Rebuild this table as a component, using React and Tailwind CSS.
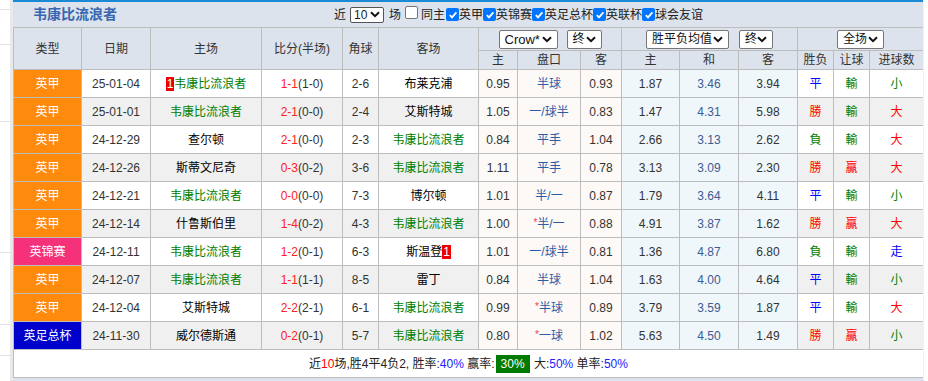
import React from 'react'

const rows = [
  {type:'英甲', date:'25-01-04', home:'韦康比流浪者', homeRank:'1', ft:'1-1', ht:'(1-0)', corner:'2-6', away:'布莱克浦', a1:'0.95', hc:'半球', a2:'0.93', e1:'1.87', ed:'3.46', e2:'3.94', r:'平', rq:'輸', ou:'小'},
  {type:'英甲', date:'25-01-01', home:'韦康比流浪者', ft:'2-1', ht:'(0-0)', corner:'2-4', away:'艾斯特城', a1:'1.05', hc:'一/球半', a2:'0.83', e1:'1.47', ed:'4.31', e2:'5.98', r:'勝', rq:'輸', ou:'大'},
  {type:'英甲', date:'24-12-29', home:'查尔顿', ft:'2-1', ht:'(0-0)', corner:'2-3', away:'韦康比流浪者', a1:'0.84', hc:'平手', a2:'1.04', e1:'2.66', ed:'3.13', e2:'2.62', r:'負', rq:'輸', ou:'大'},
  {type:'英甲', date:'24-12-26', home:'斯蒂文尼奇', ft:'0-3', ht:'(0-2)', corner:'3-6', away:'韦康比流浪者', a1:'1.11', hc:'平手', a2:'0.78', e1:'3.13', ed:'3.09', e2:'2.30', r:'勝', rq:'贏', ou:'大'},
  {type:'英甲', date:'24-12-21', home:'韦康比流浪者', ft:'0-0', ht:'(0-0)', corner:'7-3', away:'博尔顿', a1:'1.01', hc:'半/一', a2:'0.87', e1:'1.79', ed:'3.64', e2:'4.11', r:'平', rq:'輸', ou:'小'},
  {type:'英甲', date:'24-12-14', home:'什鲁斯伯里', ft:'1-4', ht:'(0-2)', corner:'4-3', away:'韦康比流浪者', a1:'1.00', hc:'半/一', star:true, a2:'0.88', e1:'4.91', ed:'3.87', e2:'1.62', r:'勝', rq:'贏', ou:'大'},
  {type:'英锦赛', date:'24-12-11', home:'韦康比流浪者', ft:'1-2', ht:'(0-1)', corner:'6-3', away:'斯温登', awayRank:'1', a1:'1.01', hc:'一/球半', a2:'0.81', e1:'1.36', ed:'4.87', e2:'6.80', r:'負', rq:'輸', ou:'走'},
  {type:'英甲', date:'24-12-07', home:'韦康比流浪者', ft:'1-1', ht:'(1-1)', corner:'8-5', away:'雷丁', a1:'0.84', hc:'半球', a2:'1.04', e1:'1.63', ed:'4.00', e2:'4.64', r:'平', rq:'輸', ou:'小'},
  {type:'英甲', date:'24-12-04', home:'艾斯特城', ft:'2-2', ht:'(2-1)', corner:'6-1', away:'韦康比流浪者', a1:'0.99', hc:'半球', star:true, a2:'0.89', e1:'3.79', ed:'3.59', e2:'1.87', r:'平', rq:'輸', ou:'大'},
  {type:'英足总杯', date:'24-11-30', home:'威尔德斯通', ft:'0-2', ht:'(0-1)', corner:'5-7', away:'韦康比流浪者', a1:'0.80', hc:'一球', star:true, a2:'1.02', e1:'5.63', ed:'4.50', e2:'1.49', r:'勝', rq:'贏', ou:'小'},
]

const typeBg = { '英甲': 'bg-[#ff8a0c]', '英锦赛': 'bg-[#f5317a]', '英足总杯': 'bg-[#0000cc]' }
const resultColor = { '平': 'text-[#0000ff]', '勝': 'text-[#ff0000]', '負': 'text-[#008000]' }
const rqColor = { '輸': 'text-[#008000]', '贏': 'text-[#ff0000]' }
const ouColor = { '小': 'text-[#008000]', '大': 'text-[#ff0000]', '走': 'text-[#0000ff]' }

const MY = '韦康比流浪者'

function Chevron(){
  return (
    <svg width="10" height="7" viewBox="0 0 10 7" className="shrink-0">
      <path d="M1 1.2 L5 5.2 L9 1.2" fill="none" stroke="#111" strokeWidth="2" />
    </svg>
  )
}

function FakeSelect({label, w, size}){
  return (
    <span className={`inline-flex items-center justify-between h-[19px] ${w} pl-[5px] pr-[5px] bg-white border border-[#767676] rounded-[2px] ${size} text-[#111] whitespace-nowrap`}>
      <span>{label}</span>
      <Chevron />
    </span>
  )
}

function Box({checked}){
  if(checked){
    return (
      <span className="inline-flex items-center justify-center w-[13px] h-[13px] rounded-[2px] bg-[#0075ff]">
        <svg width="10" height="10" viewBox="0 0 10 10">
          <path d="M1.8 5.2 L4 7.4 L8.4 2.4" fill="none" stroke="#fff" strokeWidth="1.8" />
        </svg>
      </span>
    )
  }
  return <span className="inline-block w-[13px] h-[13px] rounded-[2px] border border-[#767676] bg-white" />
}

function Team({name, rank, after}){
  const color = name === MY ? 'text-[#008000]' : 'text-black'
  return (
    <span className={color}>
      {rank && !after && <span className="bg-[#ee0000] text-white px-[1px]">{rank}</span>}
      {name}
      {rank && after && <span className="bg-[#ee0000] text-white px-[1px]">{rank}</span>}
    </span>
  )
}

const td = 'border border-[#bdbdbd] text-center p-0 whitespace-nowrap'
const th = 'border border-[#bdbdbd] text-center p-0 font-normal text-[#333] whitespace-nowrap'

export default function App(){
  return (
    <div className="w-[928px] h-[381px] flex bg-white overflow-hidden" style={{fontFamily:'"Liberation Sans", "Noto Sans CJK SC", sans-serif'}}>
      {/* left page edge */}
      <div className="w-[10px] h-full flex flex-col">
        <div className="h-[10px] border-b border-[#e2e2e2]" />
        <div className="h-[35px] border-b border-[#e2e2e2]" />
        <div className="h-[77px] border-b border-[#e2e2e2]" />
        <div className="h-[131px] border-b border-[#e2e2e2]" />
        <div className="h-[72px] border-b border-[#e2e2e2]" />
        <div className="h-[31px] border-b border-[#e2e2e2]" />
      </div>
      <div className="w-[3px] h-full bg-[#e9e9e9]" />

      {/* panel */}
      <div className="w-[910px] h-full bg-[#dce3ec] flex flex-col">
        <div className="h-[2px] bg-[#1b8ad6]" />
        <div className="h-[25px] flex items-center text-[12px] text-[#222] whitespace-nowrap">
          <span className="ml-[20px] text-[14px] font-bold text-[#3866b0]">韦康比流浪者</span>
          <div className="ml-[217px] flex items-center">
            <span>近</span>
            <span className="ml-[4px] inline-flex items-center justify-between h-[16px] w-[34px] px-[3px] bg-white border border-[#555] rounded-[2px] text-[12px]">
              <span>10</span><Chevron />
            </span>
            <span className="ml-[5px]">场</span>
            <span className="ml-[4px] mr-[3px]"><Box /></span>
            <span className="mr-[1px]">同主</span>
            <Box checked /><span>英甲</span>
            <Box checked /><span>英锦赛</span>
            <Box checked /><span>英足总杯</span>
            <Box checked /><span>英联杯</span>
            <Box checked /><span>球会友谊</span>
          </div>
        </div>

        <table className="table-fixed border-collapse w-[910px] text-[12px] leading-none">
          <colgroup>
            <col className="w-[68px]" />
            <col className="w-[69px]" />
            <col className="w-[111px]" />
            <col className="w-[81px]" />
            <col className="w-[36px]" />
            <col className="w-[100px]" />
            <col className="w-[39px]" />
            <col className="w-[63px]" />
            <col className="w-[41px]" />
            <col className="w-[58px]" />
            <col className="w-[59px]" />
            <col className="w-[59px]" />
            <col className="w-[36px]" />
            <col className="w-[36px]" />
            <col className="w-[54px]" />
          </colgroup>
          <thead>
            <tr className="h-[23px]">
              <th rowSpan={2} className={th}>类型</th>
              <th rowSpan={2} className={th}>日期</th>
              <th rowSpan={2} className={th}>主场</th>
              <th rowSpan={2} className={th}>比分(半场)</th>
              <th rowSpan={2} className={th}>角球</th>
              <th rowSpan={2} className={th}>客场</th>
              <th colSpan={3} className={th}>
                <div className="flex items-center justify-center gap-[9px]">
                  <FakeSelect label="Crow*" w="w-[59px]" size="text-[13px]" />
                  <FakeSelect label="终" w="w-[35px]" size="text-[12px]" />
                </div>
              </th>
              <th colSpan={3} className={th}>
                <div className="flex items-center justify-center gap-[10px]">
                  <FakeSelect label="胜平负均值" w="w-[83px]" size="text-[12px]" />
                  <FakeSelect label="终" w="w-[34px]" size="text-[12px]" />
                </div>
              </th>
              <th colSpan={3} className={th}>
                <div className="flex items-center justify-center">
                  <FakeSelect label="全场" w="w-[47px]" size="text-[12px]" />
                </div>
              </th>
            </tr>
            <tr className="h-[19px]">
              <th className={th}>主</th>
              <th className={th}>盘口</th>
              <th className={th}>客</th>
              <th className={th}>主</th>
              <th className={th}>和</th>
              <th className={th}>客</th>
              <th className={th}>胜负</th>
              <th className={th}>让球</th>
              <th className={th}>进球数</th>
            </tr>
          </thead>
          <tbody>
            {rows.map((r, i) => (
              <tr key={i} className={`h-[28px] ${i % 2 ? 'bg-[#f0f0f0]' : 'bg-white'}`}>
                <td className={`${td} ${typeBg[r.type]} text-white`}>{r.type}</td>
                <td className={`${td} text-[#333]`}>{r.date}</td>
                <td className={td}><Team name={r.home} rank={r.homeRank} /></td>
                <td className={td}>
                  <span className="text-[#ff2020]">{r.ft}</span><span className="text-[#333]">{r.ht}</span>
                </td>
                <td className={`${td} text-[#333]`}>{r.corner}</td>
                <td className={td}><Team name={r.away} rank={r.awayRank} after /></td>
                <td className={`${td} bg-[#fdf9f6] text-[#333]`}>{r.a1}</td>
                <td className={`${td} bg-[#fdf9f6] text-[#2b5ca6]`}>
                  {r.star && <span className="text-[#ff3355] relative -top-[2px] text-[10px]">*</span>}{r.hc}
                </td>
                <td className={`${td} bg-[#fdf9f6] text-[#333]`}>{r.a2}</td>
                <td className={`${td} bg-[#f0f7fb] text-[#333]`}>{r.e1}</td>
                <td className={`${td} bg-[#f0f7fb] text-[#3d5b94]`}>{r.ed}</td>
                <td className={`${td} bg-[#f0f7fb] text-[#333]`}>{r.e2}</td>
                <td className={`${td} ${resultColor[r.r]}`}>{r.r}</td>
                <td className={`${td} ${rqColor[r.rq]}`}>{r.rq}</td>
                <td className={`${td} ${ouColor[r.ou]}`}>{r.ou}</td>
              </tr>
            ))}
            <tr className="h-[28px] bg-white">
              <td colSpan={15} className={`${td} text-[#222]`}>
                近<span className="text-[#ff0000]">10</span>场,胜4平4负2, 胜率:<span className="text-[#2222ff]">40%</span> 赢率:<span className="inline-block bg-[#007a00] text-white px-[5px] py-[3px] mx-[1px]">30%</span> 大:<span className="text-[#2222ff]">50%</span> 单率:<span className="text-[#2222ff]">50%</span>
              </td>
            </tr>
          </tbody>
        </table>
      </div>
      <div className="w-[1px] h-full bg-[#eef1f5]" />
    </div>
  )
}
